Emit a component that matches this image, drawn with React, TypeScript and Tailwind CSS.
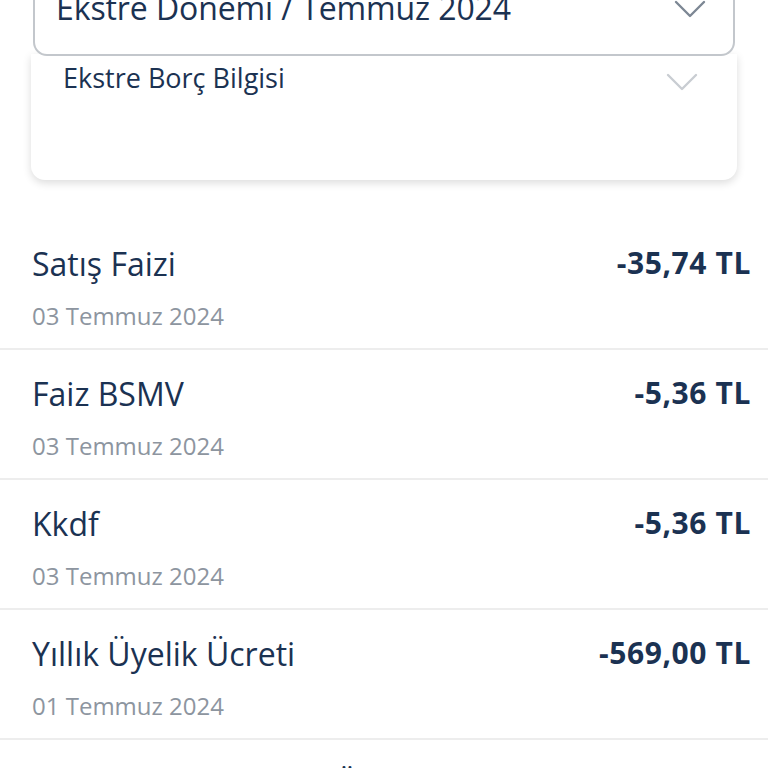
const rows = [
  { title: "Satış Faizi", date: "03 Temmuz 2024", amount: "-35,74 TL" },
  { title: "Faiz BSMV", date: "03 Temmuz 2024", amount: "-5,36 TL" },
  { title: "Kkdf", date: "03 Temmuz 2024", amount: "-5,36 TL" },
  { title: "Yıllık Üyelik Ücreti", date: "01 Temmuz 2024", amount: "-569,00 TL" },
  { title: "Taksitli Nakit Avansı Ücreti", date: "01 Temmuz 2024", amount: "" },
];

function Chevron({ className }: { className: string }) {
  return (
    <svg viewBox="0 0 32 18" className={className} fill="none" stroke="currentColor" strokeWidth={2.4} strokeLinecap="round" strokeLinejoin="round">
      <polyline points="2,2 16,16 30,2" />
    </svg>
  );
}

export default function App() {
  return (
    <div className="h-[768px] w-[768px] overflow-hidden bg-white font-['Open_Sans',sans-serif]">
      <div className="-mt-[40px] px-[31px]">
        <div className="relative z-10 mx-[2px] flex h-[96px] items-end justify-between rounded-[14px] border-2 border-[#c3c7cc] bg-white pb-[30px] pl-[21px] pr-[27px]">
          <span className="text-[32px] leading-none tracking-[-0.1px] text-[#1b3252]">Ekstre Dönemi / Temmuz 2024</span>
          <Chevron className="mb-[6px] h-[18px] w-[32px] text-[#7d8794]" />
        </div>
        <div className="-mt-[2px] flex h-[126px] justify-between rounded-b-[14px] bg-white pl-[32px] pr-[39px] pt-[10px] shadow-[0_3px_8px_rgba(0,0,0,0.14)]">
          <span className="text-[27px] leading-none text-[#1b3252]">Ekstre Borç Bilgisi</span>
          <Chevron className="mt-[9px] h-[18px] w-[32px] text-[#c9cdd2]" />
        </div>
      </div>
      <div className="mt-[40px]">
        {rows.map((r, i) => (
          <div key={i} className="flex h-[130px] justify-between border-b-2 border-[#ededed] pl-[32px] pr-[17px] pt-[26px]">
            <div className="flex flex-col">
              <span className="text-[32px] leading-[36px] text-[#1b3252]">{r.title}</span>
              <span className="mt-[21px] text-[24px] leading-[26px] text-[#8d959f]">{r.date}</span>
            </div>
            <span className="text-[30px] font-bold leading-[34px] tracking-[0.6px] text-[#1b3252]">{r.amount}</span>
          </div>
        ))}
      </div>
    </div>
  );
}
